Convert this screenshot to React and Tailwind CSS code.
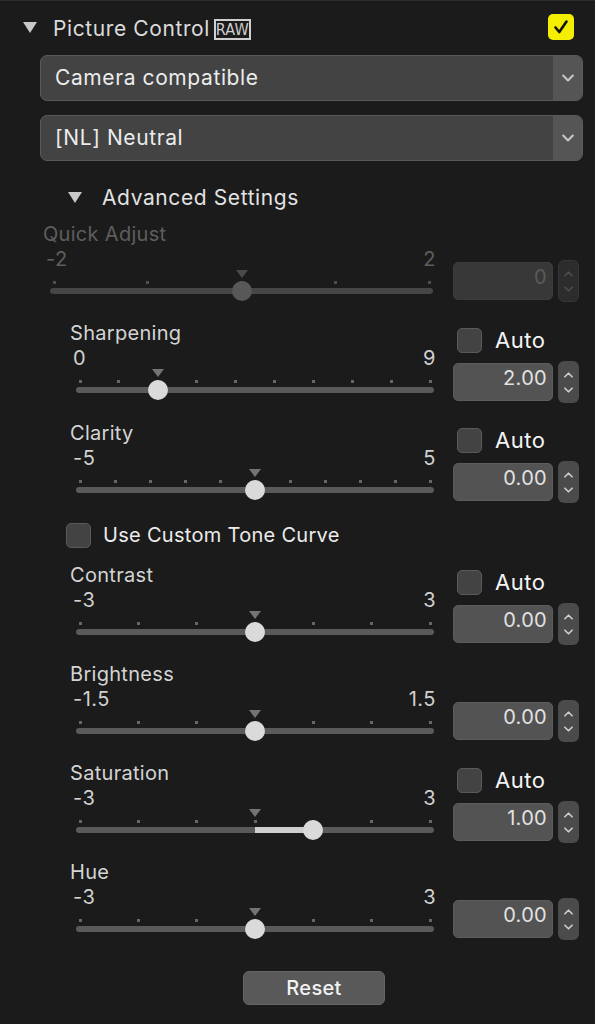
import React from "react";

function Chevron({ dir = "down", className = "", w = 10, h = 6 }) {
  const d = dir === "down" ? "M1 1 L5 5 L9 1" : "M1 5 L5 1 L9 5";
  return (
    <svg width={w} height={h} viewBox="0 0 10 6" className={className}>
      <path d={d} fill="none" stroke="currentColor" strokeWidth="1.8" strokeLinecap="round" strokeLinejoin="round" />
    </svg>
  );
}

function Dropdown({ text }) {
  return (
    <div className="flex h-[46px] ml-[40px] mr-[12px] rounded-[7px] border border-[#5a5a5a] bg-[#434343] overflow-hidden">
      <div className="flex-1 flex items-center pl-[14px] text-[21px] tracking-[0.6px] text-[#ececec]">{text}</div>
      <div className="w-[29px] bg-[#555555] flex items-center justify-center text-[#c4c4c4]">
        <Chevron dir="down" w={12} h={8} />
      </div>
    </div>
  );
}

function Slider({ width, n, value, def, disabled, fill }) {
  const inner = width - 8;
  const pos = (i) => 4 + (i * inner) / (n - 1);
  const vpos = 4 + value * inner;
  const dpos = 4 + def * inner;
  const tick = disabled ? "bg-[#4e4e4e]" : "bg-[#666666]";
  return (
    <div className="relative h-[33px]" style={{ width }}>
      <div
        className={`absolute top-[1px] w-0 h-0 border-l-[6px] border-r-[6px] border-t-[8px] border-l-transparent border-r-transparent ${disabled ? "border-t-[#4a4a4a]" : "border-t-[#747474]"}`}
        style={{ left: dpos - 6 }}
      />
      {Array.from({ length: n }).map((_, i) => (
        <div key={i} className={`absolute top-[12px] w-[3px] h-[3px] ${tick}`} style={{ left: pos(i) - 1.5 }} />
      ))}
      <div className={`absolute top-[19px] left-0 right-0 h-[6px] rounded-full ${disabled ? "bg-[#464646]" : "bg-[#5a5a5a]"}`} />
      {fill && (
        <div className="absolute top-[19px] h-[6px] bg-[#cfcfcf]" style={{ left: dpos, width: vpos - dpos }} />
      )}
      <div
        className={`absolute top-[12px] w-[20px] h-[20px] rounded-full ${disabled ? "bg-[#585858]" : "bg-[#dadada]"}`}
        style={{ left: vpos - 10 }}
      />
    </div>
  );
}

function Checkbox({ className = "" }) {
  return <div className={`w-[25px] h-[25px] rounded-[5px] bg-[#434343] border border-[#5a5a5a] ${className}`} />;
}

function NumberField({ value, disabled }) {
  return (
    <div className="flex items-center h-[42px]">
      <div
        className={`w-[100px] h-[38px] rounded-[5px] border flex items-center justify-end pr-[5px] pb-[8px] text-[20px] tracking-[0.3px] ${
          disabled ? "bg-[#383838] border-[#3c3c3c] text-[#5a5a5a]" : "bg-[#535353] border-[#5c5c5c] text-[#e2e2e2]"
        }`}
      >
        {value}
      </div>
      <div
        className={`ml-[5px] w-[21px] h-[42px] rounded-[6px] flex flex-col items-center justify-center gap-[9px] ${
          disabled ? "bg-[#2c2c2c] border border-[#363636] text-[#4e4e4e]" : "bg-[#4b4b4b] text-[#cfcfcf]"
        }`}
      >
        <Chevron dir="up" w={9} h={6} />
        <Chevron dir="down" w={9} h={6} />
      </div>
    </div>
  );
}

function Section({ label, min, max, n, value, def, auto, number, fill, disabled, quick }) {
  const textMain = disabled ? "text-[#5e5e5e]" : "text-[#d4d4d4]";
  const textNum = disabled ? "text-[#5e5e5e]" : "text-[#d0d0d0]";
  return (
    <div className="flex h-[78px]">
      <div className={`flex flex-col ${quick ? "ml-[43px] w-[393px]" : "ml-[70px] w-[366px]"}`}>
        <div className={`h-[20px] leading-[20px] text-[20px] tracking-[0.3px] ${textMain}`}>{label}</div>
        <div className={`mt-[5px] h-[20px] leading-[20px] flex justify-between pl-[3px] text-[20px] tracking-[0.5px] ${textNum}`}>
          <span>{min}</span>
          <span>{max}</span>
        </div>
        <div className={quick ? "ml-[7px]" : "ml-[6px]"}>
          <Slider width={quick ? 383 : 358} n={n} value={value} def={def} disabled={disabled} fill={fill} />
        </div>
      </div>
      <div className="ml-[17px] flex flex-col">
        <div className="h-[30px] pt-[5px]">
          {auto && (
            <div className="flex items-center ml-[4px] h-[25px]">
              <Checkbox />
              <span className="ml-[13px] text-[22px] tracking-[0.5px] text-[#f4f4f4]">Auto</span>
            </div>
          )}
        </div>
        <div className="mt-[8px]">
          <NumberField value={number} disabled={disabled} />
        </div>
      </div>
    </div>
  );
}

export default function App() {
  return (
    <div className="w-[595px] h-[1024px] bg-[#1b1b1b] border-t border-[#2c2c2c] font-['Inter','Noto_Sans',sans-serif] overflow-hidden">
      {/* Header */}
      <div className="mt-[13px] h-[26px] flex items-center pr-[21px]">
        <div className="ml-[23px] w-0 h-0 border-l-[7px] border-r-[7px] border-t-[11px] border-l-transparent border-r-transparent border-t-[#c8c8c8]" />
        <span className="ml-[16px] text-[21px] tracking-[0.6px] text-[#dcdcdc] mt-[4px]">Picture Control</span>
        <span className="ml-[4px] mt-[5px] w-[37px] h-[21px] border-2 border-[#cfcfcf] flex items-center justify-center text-[16px] leading-none text-[#cfcfcf] font-['DejaVu_Sans_Condensed','Liberation_Sans',sans-serif] tracking-[0.3px]">
          RAW
        </span>
        <div className="ml-auto w-[26px] h-[26px] rounded-[5px] bg-[#f4ee00] flex items-center justify-center">
          <svg width="16" height="16" viewBox="0 0 16 16">
            <path d="M2.5 8.5 L6.3 13 L13.5 2.5" fill="none" stroke="#111" strokeWidth="2.6" strokeLinecap="round" strokeLinejoin="round" />
          </svg>
        </div>
      </div>

      <div className="mt-[15px]">
        <Dropdown text="Camera compatible" />
      </div>
      <div className="mt-[14px]">
        <Dropdown text="[NL] Neutral" />
      </div>

      {/* Advanced settings */}
      <div className="mt-[25px] h-[24px] flex items-center">
        <div className="ml-[68px] w-0 h-0 border-l-[7px] border-r-[7px] border-t-[11px] border-l-transparent border-r-transparent border-t-[#c8c8c8] -mt-[2px]" />
        <span className="ml-[20px] text-[21px] tracking-[0.6px] text-[#e2e2e2]">Advanced Settings</span>
      </div>

      <div className="mt-[14px] flex flex-col">
        <Section quick disabled label="Quick Adjust" min="-2" max="2" n={5} value={0.5} def={0.5} number="0" />
        <div className="mt-[21px]">
          <Section label="Sharpening" min="0" max="9" n={10} value={2 / 9} def={2 / 9} auto number="2.00" />
        </div>
        <div className="mt-[22px]">
          <Section label="Clarity" min="-5" max="5" n={11} value={0.5} def={0.5} auto number="0.00" />
        </div>
      </div>

      {/* Tone curve */}
      <div className="mt-[21px] h-[26px] flex items-center">
        <Checkbox className="ml-[66px]" />
        <span className="ml-[12px] text-[20px] tracking-[0.3px] text-[#ececec]">Use Custom Tone Curve</span>
      </div>

      <div className="mt-[17px] flex flex-col gap-[21px]">
        <Section label="Contrast" min="-3" max="3" n={7} value={0.5} def={0.5} auto number="0.00" />
        <Section label="Brightness" min="-1.5" max="1.5" n={7} value={0.5} def={0.5} number="0.00" />
        <Section label="Saturation" min="-3" max="3" n={7} value={4 / 6} def={0.5} fill auto number="1.00" />
        <Section label="Hue" min="-3" max="3" n={7} value={0.5} def={0.5} number="0.00" />
      </div>

      <div className="mt-[31px] flex justify-center pl-[33px]">
        <button className="w-[142px] h-[34px] rounded-[6px] bg-[#595959] border border-[#666666] text-[20px] font-medium tracking-[0.3px] text-[#f2f2f2]">
          Reset
        </button>
      </div>
    </div>
  );
}
